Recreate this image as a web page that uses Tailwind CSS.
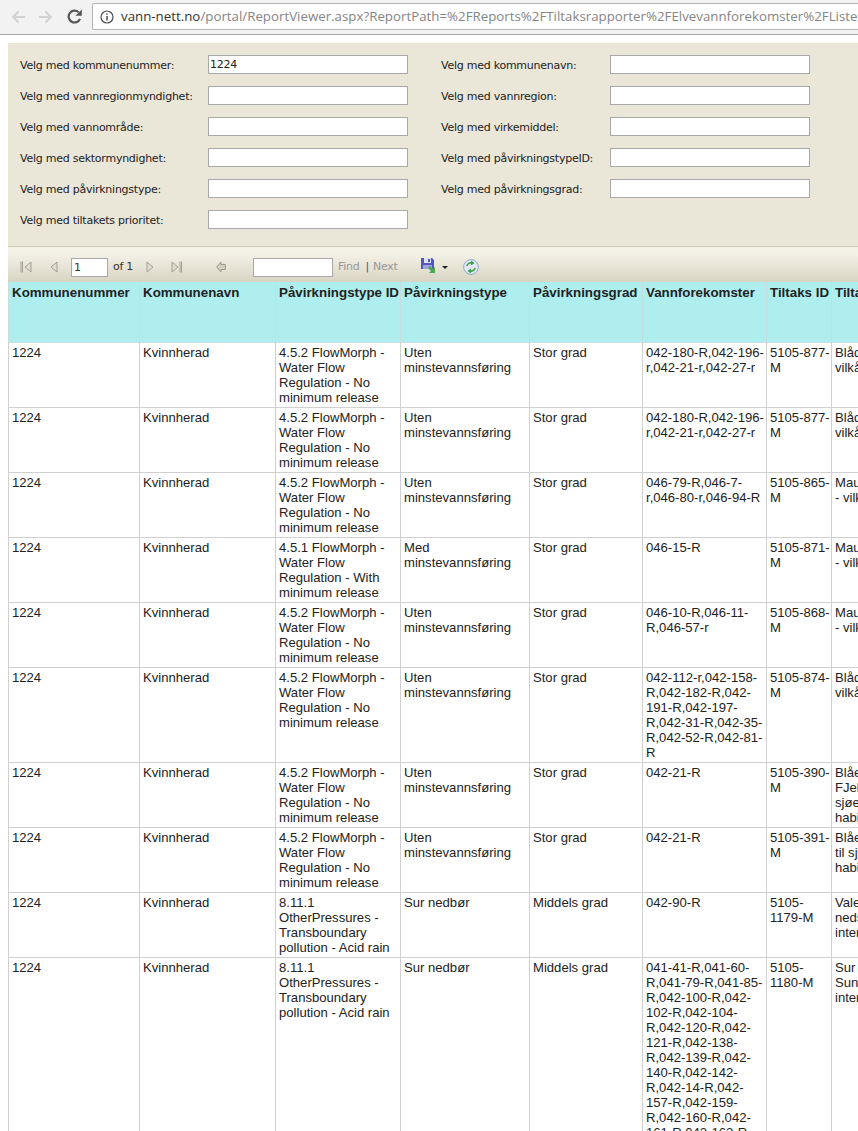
<!DOCTYPE html>
<html lang="no">
<head>
<meta charset="utf-8">
<title>ReportViewer</title>
<script src="https://cdn.jsdelivr.net/npm/@tailwindcss/browser@4"></script>
</head>
<body class="bg-white">
<div class="w-[858px] h-[1131px] overflow-hidden bg-white font-['Liberation_Sans',Arial,sans-serif]">

  <!-- browser bar -->
  <div class="h-[35px] bg-[#f2f2f2] border-b border-[#a6a6a6] flex items-start">
    <div class="flex items-center w-[92px] mt-[9px] pl-[11px] shrink-0">
      <svg class="w-[14px] h-[14px] mr-[14px]" viewBox="0 0 14 14" fill="none" stroke="#d2d2d2" stroke-width="2"><path d="M14 7H2M7.500 1.500L2 7l5.500 5.500"/></svg>
      <svg class="w-[14px] h-[14px] mr-[14px]" viewBox="0 0 14 14" fill="none" stroke="#d2d2d2" stroke-width="2"><path d="M0 7h12M6.500 1.500L12 7l-5.500 5.500"/></svg>
      <svg class="w-[15px] h-[15px]" viewBox="0 0 15 15" fill="none" stroke="#555" stroke-width="2.200"><path d="M13 9.800A5.900 5.900 0 1 1 11.600 3.300"/><path d="M14.800 .5v6.300H8.500z" fill="#555" stroke="none"/></svg>
    </div>
    <div class="flex-1 h-[27px] mt-[3px] bg-white border border-r-0 border-[#b4b4b4] rounded-l-[2px] flex items-center overflow-hidden whitespace-nowrap font-['Open_Sans',sans-serif] text-[13.3px] text-[#858585]">
      <svg class="w-[14px] h-[14px] ml-[7px] mr-[7px] shrink-0" viewBox="0 0 14 14" fill="none" stroke="#4a4a4a" stroke-width="1.200"><circle cx="7" cy="7" r="6"/><path d="M7 6v4.500M7 3.400v1.300" stroke-width="1.500"/></svg>
      <span class="text-[#333]">vann-nett.no</span><span>/portal/ReportViewer.aspx?ReportPath=%2FReports%2FTiltaksrapporter%2FElvevannforekomster%2FListerapport</span>
    </div>
  </div>

  <div class="h-2"></div>

  <!-- parameter panel -->
  <div class="ml-2 h-[203px] bg-[#eae7d9] pt-3 pl-3 font-['DejaVu_Sans',Verdana,sans-serif] text-[11px] tracking-[-0.25px] text-[#222]">
    <div class="grid grid-cols-[188px_200px_33px_169px_200px] auto-rows-[20px] gap-y-[11px] items-center [&>span]:pt-[2px] [&>input]:self-start">
      <span>Velg med kommunenummer:</span><input value="1224" class="h-[19px] bg-white border border-[#a9a9a9] px-[1px] text-[11px]">
      <span></span>
      <span>Velg med kommunenavn:</span><input class="h-[19px] bg-white border border-[#a9a9a9]">

      <span>Velg med vannregionmyndighet:</span><input class="h-[19px] bg-white border border-[#a9a9a9]">
      <span></span>
      <span>Velg med vannregion:</span><input class="h-[19px] bg-white border border-[#a9a9a9]">

      <span>Velg med vannområde:</span><input class="h-[19px] bg-white border border-[#a9a9a9]">
      <span></span>
      <span>Velg med virkemiddel:</span><input class="h-[19px] bg-white border border-[#a9a9a9]">

      <span>Velg med sektormyndighet:</span><input class="h-[19px] bg-white border border-[#a9a9a9]">
      <span></span>
      <span>Velg med påvirkningstypeID:</span><input class="h-[19px] bg-white border border-[#a9a9a9]">

      <span>Velg med påvirkningstype:</span><input class="h-[19px] bg-white border border-[#a9a9a9]">
      <span></span>
      <span>Velg med påvirkningsgrad:</span><input class="h-[19px] bg-white border border-[#a9a9a9]">

      <span>Velg med tiltakets prioritet:</span><input class="h-[19px] bg-white border border-[#a9a9a9]">
    </div>
  </div>

  <!-- toolbar -->
  <div class="ml-2 h-[36px] border-t border-[#cfcbb9] bg-linear-to-b from-[#f3f0e6] from-20% to-[#d9d5c4] flex items-center pt-[5px] font-['DejaVu_Sans',Verdana,sans-serif] text-[11px] tracking-[-0.25px] text-[#333]">
    <svg class="w-3 h-3 ml-3" viewBox="0 0 12 12" fill="#e0ddcf" stroke="#a3a196"><path d="M1 .5v11M2.500 .5v11M11 1v10L5 6z"/></svg>
    <svg class="w-2 h-3 ml-[18px]" viewBox="0 0 8 12" fill="#e0ddcf" stroke="#a3a196"><path d="M7 1v10L1 6z"/></svg>
    <input value="1" class="w-[37px] h-[19px] ml-[13px] bg-white border border-[#a9a9a9] px-[2px] text-[11px]">
    <span class="ml-[5px] w-[20px] whitespace-nowrap">of 1</span>
    <svg class="w-2 h-3 ml-[13px]" viewBox="0 0 8 12" fill="#e0ddcf" stroke="#a3a196"><path d="M1 1v10l6-5z"/></svg>
    <svg class="w-3 h-3 ml-[17px]" viewBox="0 0 12 12" fill="#e0ddcf" stroke="#a3a196"><path d="M1 1v10l6-5zM9 .5v11M10.500 .5v11"/></svg>
    <svg class="w-[10px] h-3 ml-[33px]" viewBox="0 0 10 12" fill="#d2cfc1" stroke="#9c9a8e"><path d="M.7 6L5 1v2.500h4.300v5H5V11z"/></svg>
    <input class="w-[80px] h-[19px] ml-[27px] bg-white border border-[#a9a9a9]">
    <span class="ml-[5px] text-[#989898]">Find</span>
    <span class="ml-[6px] text-[#5b4a7a]">|</span>
    <span class="ml-[4px] text-[#989898]">Next</span>
    <svg class="w-[17px] h-[17px] ml-[23px] -mt-[2px]" viewBox="0 0 17 17"><path d="M0 0h11l2 2v9H0z" fill="#5458bb"/><path d="M3 0h7v5H3z" fill="#dfe2f5"/><path d="M7 1h2v3H7z" fill="#5458bb"/><path d="M2 7h9v4H2z" fill="#9da3dc"/><path d="M7 10l2-2 3 3 2-2v6h-6l2-2z" fill="#4ca64c"/></svg>
    <svg class="w-[6px] h-[3px] ml-[4px]" viewBox="0 0 6 3" fill="#222"><path d="M0 0h6L3 3z"/></svg>
    <svg class="w-4 h-4 ml-[15px]" viewBox="0 0 16 16" fill="none"><circle cx="8" cy="8" r="7.400" fill="#e3e9f3" stroke="#8fa9cf"/><path d="M4 7a4 4 0 0 1 5-3" stroke="#3aa04a" stroke-width="1.600"/><path d="M8 1.500l3.500 2.500L8 6.500z" fill="#3aa04a"/><path d="M12 9a4 4 0 0 1-5 3" stroke="#3aa04a" stroke-width="1.600"/><path d="M8 14.500L4.500 12 8 9.500z" fill="#3aa04a"/></svg>
  </div>

  <!-- report table -->
  <table class="ml-2 table-fixed border-separate border-spacing-0 w-[1031px] text-[13.1px] leading-[15px] text-[#222]">
    <colgroup>
      <col class="w-[131px]"><col class="w-[136px]"><col class="w-[125px]"><col class="w-[129px]"><col class="w-[113px]"><col class="w-[124px]"><col class="w-[65px]"><col class="w-[208px]">
    </colgroup>
    <thead>
      <tr class="bg-[#afeeee] text-left align-top text-[13.33px]">
        <th class="h-[61px] border-l border-b border-[#c6dede] pl-[3px] pt-[3px] font-bold">Kommunenummer</th>
        <th class="border-l border-b border-[#c6dede] pl-[3px] pt-[3px] font-bold">Kommunenavn</th>
        <th class="border-l border-b border-[#c6dede] pl-[3px] pt-[3px] font-bold whitespace-nowrap">Påvirkningstype ID</th>
        <th class="border-l border-b border-[#c6dede] pl-[3px] pt-[3px] font-bold">Påvirkningstype</th>
        <th class="border-l border-b border-[#c6dede] pl-[3px] pt-[3px] font-bold">Påvirkningsgrad</th>
        <th class="border-l border-b border-[#c6dede] pl-[3px] pt-[3px] font-bold">Vannforekomster</th>
        <th class="border-l border-b border-[#c6dede] pl-[3px] pt-[3px] font-bold whitespace-nowrap">Tiltaks ID</th>
        <th class="border-l border-b border-[#c6dede] pl-[3px] pt-[3px] font-bold whitespace-nowrap">Tiltaksnavn</th>
      </tr>
    </thead>
    <tbody class="align-top [&_td]:border-l [&_td]:border-b [&_td]:border-[#d0d0d0] [&_td]:pl-[3px] [&_td]:pt-[2px] [&_td]:pb-[2px]">
      <tr><td>1224</td><td>Kvinnherad</td><td>4.5.2 FlowMorph - Water Flow Regulation - No minimum release</td><td>Uten minstevannsføring</td><td>Stor grad</td><td>042-180-R,042-196-r,042-21-r,042-27-r</td><td>5105-877-M</td><td class="whitespace-nowrap">Blådalsvassdraget<br>vilkårsrevisjon</td></tr>
      <tr><td>1224</td><td>Kvinnherad</td><td>4.5.2 FlowMorph - Water Flow Regulation - No minimum release</td><td>Uten minstevannsføring</td><td>Stor grad</td><td>042-180-R,042-196-r,042-21-r,042-27-r</td><td>5105-877-M</td><td class="whitespace-nowrap">Blådalsvassdraget<br>vilkårsrevisjon</td></tr>
      <tr><td>1224</td><td>Kvinnherad</td><td>4.5.2 FlowMorph - Water Flow Regulation - No minimum release</td><td>Uten minstevannsføring</td><td>Stor grad</td><td>046-79-R,046-7-r,046-80-r,046-94-R</td><td>5105-865-M</td><td class="whitespace-nowrap">Mauranger<br>- vilkårsrevisjon</td></tr>
      <tr><td>1224</td><td>Kvinnherad</td><td>4.5.1 FlowMorph - Water Flow Regulation - With minimum release</td><td>Med minstevannsføring</td><td>Stor grad</td><td>046-15-R</td><td>5105-871-M</td><td class="whitespace-nowrap">Mauranger<br>- vilkårsrevisjon</td></tr>
      <tr><td>1224</td><td>Kvinnherad</td><td>4.5.2 FlowMorph - Water Flow Regulation - No minimum release</td><td>Uten minstevannsføring</td><td>Stor grad</td><td>046-10-R,046-11-R,046-57-r</td><td>5105-868-M</td><td class="whitespace-nowrap">Mauranger<br>- vilkårsrevisjon</td></tr>
      <tr><td>1224</td><td>Kvinnherad</td><td>4.5.2 FlowMorph - Water Flow Regulation - No minimum release</td><td>Uten minstevannsføring</td><td>Stor grad</td><td>042-112-r,042-158-R,042-182-R,042-191-R,042-197-R,042-31-R,042-35-R,042-52-R,042-81-R</td><td>5105-874-M</td><td class="whitespace-nowrap">Blådalsvassdraget<br>vilkårsrevisjon</td></tr>
      <tr><td>1224</td><td>Kvinnherad</td><td>4.5.2 FlowMorph - Water Flow Regulation - No minimum release</td><td>Uten minstevannsføring</td><td>Stor grad</td><td>042-21-R</td><td>5105-390-M</td><td class="whitespace-nowrap">Blåelva<br>FJellvatn<br>sjøen<br>habitat</td></tr>
      <tr><td>1224</td><td>Kvinnherad</td><td>4.5.2 FlowMorph - Water Flow Regulation - No minimum release</td><td>Uten minstevannsføring</td><td>Stor grad</td><td>042-21-R</td><td>5105-391-M</td><td class="whitespace-nowrap">Blåelva<br>til sjøen<br>habitat</td></tr>
      <tr><td>1224</td><td>Kvinnherad</td><td>8.11.1 OtherPressures - Transboundary pollution - Acid rain</td><td>Sur nedbør</td><td>Middels grad</td><td>042-90-R</td><td>5105-1179-M</td><td class="whitespace-nowrap">Valen<br>nedslag<br>internasjonalt</td></tr>
      <tr><td>1224</td><td>Kvinnherad</td><td>8.11.1 OtherPressures - Transboundary pollution - Acid rain</td><td>Sur nedbør</td><td>Middels grad</td><td>041-41-R,041-60-R,041-79-R,041-85-R,042-100-R,042-102-R,042-104-R,042-120-R,042-121-R,042-138-R,042-139-R,042-140-R,042-142-R,042-14-R,042-157-R,042-159-R,042-160-R,042-161-R,042-162-R</td><td>5105-1180-M</td><td class="whitespace-nowrap">Sur nedbør<br>Sunnhordland<br>internasjonalt</td></tr>
    </tbody>
  </table>
</div>
</body>
</html>
